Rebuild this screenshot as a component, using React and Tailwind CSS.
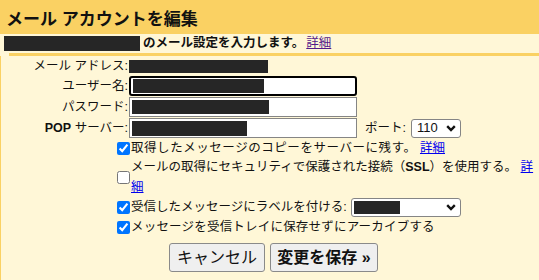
const Redact = ({ w, h = 'h-[14px]' }) => (
  <span className={`inline-block ${w} ${h} bg-[#262626] shrink-0`} />
)

const Chevron = () => (
  <svg width="10" height="7" viewBox="0 0 10 7" className="shrink-0">
    <path d="M1.2 1.2 5 5 8.8 1.2" fill="none" stroke="#111" strokeWidth="2.4" />
  </svg>
)

const Box = ({ focused, children }) => (
  <div
    className={`flex items-center w-[228px] h-[20px] bg-white pl-[2px] ${
      focused ? 'border-2 border-black rounded-[3px] pl-[1px]' : 'border border-[#858585]'
    }`}
  >
    {children}
  </div>
)

const Check = ({ checked }) => (
  <input
    type="checkbox"
    defaultChecked={checked}
    className="m-0 mr-[1px] w-[13px] h-[13px] shrink-0"
  />
)

export default function App() {
  return (
    <div
      className="w-[539px] h-[280px] overflow-hidden bg-[#fff7d7] text-[#111] text-[12.5px]"
      style={{ fontFamily: '"Liberation Sans", "Noto Sans CJK JP", sans-serif' }}
    >
      {/* Title bar */}
      <div className="h-[34px] bg-[#fad163] pl-[6px] pt-[9px] text-[17px] font-bold leading-[22px]">
        メール アカウントを編集
      </div>

      {/* Sub header */}
      <div className="h-[19px] flex items-center pl-[4px] font-bold leading-[19px] whitespace-nowrap">
        <Redact w="w-[136px]" h="h-[15px]" />
        <span className="ml-[3px]">のメール設定を入力します。</span>
        <a href="#" className="ml-[2px] font-normal text-[#551a8b] underline">詳細</a>
      </div>
      <div className="ml-[9px] h-[3px] bg-[#fad163]" />

      {/* Form */}
      <div className="border-l border-[#fad163] h-[224px]">
        <div className="flex items-center h-[20px]">
          <div className="w-[128px] text-right pr-[1px]">メール アドレス:</div>
          <Redact w="w-[139px]" h="h-[13px]" />
        </div>
        <div className="flex items-center h-[20px]">
          <div className="w-[128px] text-right pr-[1px]">ユーザー名:</div>
          <Box focused>
            <Redact w="w-[131px]" />
          </Box>
        </div>
        <div className="flex items-center h-[20px] mt-[1px]">
          <div className="w-[128px] text-right pr-[1px]">パスワード:</div>
          <Box>
            <Redact w="w-[137px]" />
          </Box>
        </div>
        <div className="flex items-center h-[20px] mt-[1px]">
          <div className="w-[128px] text-right pr-[1px]">
            <span className="font-bold">POP</span> サーバー:
          </div>
          <Box>
            <Redact w="w-[115px]" h="h-[15px]" />
          </Box>
          <span className="ml-[8px]">ポート:</span>
          <div className="ml-[5px] flex items-center justify-between w-[50px] h-[19px] bg-white border border-[#858585] rounded-[3px] pl-[5px] pr-[4px] text-[13px]">
            <span>110</span>
            <Chevron />
          </div>
        </div>

        {/* Options */}
        <div className="pl-[116px]">
          <div className="flex items-center h-[19px] mt-[1px]">
            <Check checked />
            <span className="whitespace-nowrap">
              <span className="tracking-[0.55px]">取得したメッセージのコピーをサーバーに残す。</span>{' '}
              <a href="#" className="text-[#0000ee] underline">詳細</a>
            </span>
          </div>
          <div className="flex items-center h-[39px]">
            <Check />
            <span className="leading-[19.5px] whitespace-nowrap">
              メールの取得にセキュリティで保護された接続（<span className="font-bold">SSL</span>）を使用する。{' '}
              <a href="#" className="text-[#0000ee] underline">
                詳<br />細
              </a>
            </span>
          </div>
          <div className="flex items-center h-[20px]">
            <Check checked />
            <span>受信したメッセージにラベルを付ける:</span>
            <div className="ml-[4px] flex items-center justify-between w-[110px] h-[19px] bg-white border border-[#858585] rounded-[3px] pl-[2px] pr-[4px]">
              <Redact w="w-[46px]" h="h-[13px]" />
              <Chevron />
            </div>
          </div>
          <div className="flex items-center h-[20px]">
            <Check checked />
            <span className="tracking-[0.2px]">メッセージを受信トレイに保存せずにアーカイブする</span>
          </div>
        </div>

        {/* Buttons */}
        <div className="flex gap-[5px] pl-[168px] mt-[6px]">
          <button className="w-[96px] h-[29px] bg-[#efefef] border border-[#8a8a8a] rounded-[3px] text-[16px]">
            キャンセル
          </button>
          <button className="w-[108px] h-[29px] bg-[#efefef] border border-[#8a8a8a] rounded-[3px] text-[16px] font-bold">
            変更を保存 »
          </button>
        </div>
      </div>
    </div>
  )
}
